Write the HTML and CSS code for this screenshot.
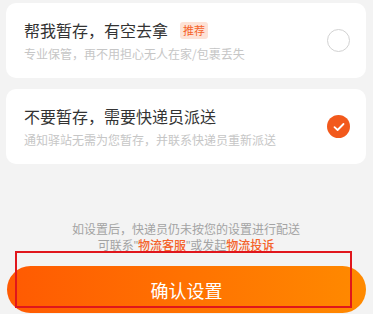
FILE: index.html
```html
<!DOCTYPE html>
<html lang="zh">
<head>
<meta charset="utf-8">
<link rel="stylesheet" href="styles.css">
</head>
<body>
<div class="page">
  <div class="card">
    <div class="info">
      <div class="title">帮我暂存，有空去拿<span class="badge">推荐</span></div>
      <div class="desc">专业保管，再不用担心无人在家/包裹丢失</div>
    </div>
    <span class="radio"></span>
  </div>
  <div class="card">
    <div class="info">
      <div class="title">不要暂存，需要快递员派送</div>
      <div class="desc">通知驿站无需为您暂存，并联系快递员重新派送</div>
    </div>
    <span class="radio checked">
      <svg width="12" height="10" viewBox="0 0 12 10"><path d="M1.5 5.2 L4.6 8 L10.5 2" fill="none" stroke="#fff" stroke-width="1.8" stroke-linecap="round" stroke-linejoin="round"/></svg>
    </span>
  </div>
  <div class="note">
    <div>如设置后，快递员仍未按您的设置进行配送</div>
    <div>可联系<span class="q">"</span><span class="link">物流客服</span><span class="q">"</span>或发起<span class="link">物流投诉</span></div>
  </div>
  <button class="confirm">确认设置</button>
  <div class="mark"></div>
</div>
</body>
</html>
```
FILE: styles.css
```css
html, body {
  margin: 0;
  padding: 0;
  background: #f3f3f3;
}
body {
  font-family: "Noto Sans CJK SC", "Noto Sans", sans-serif;
  width: 373px;
  height: 314px;
  overflow: hidden;
}
.page {
  position: relative;
  padding: 3px 7px 0 6px;
  display: flex;
  flex-direction: column;
}
.card {
  background: #fff;
  border-radius: 10px;
  padding: 16px 16px 16px 18px;
  display: flex;
  align-items: center;
  justify-content: space-between;
  margin-bottom: 11px;
}
.title {
  font-size: 16px;
  line-height: 22px;
  color: #333;
  display: flex;
  align-items: center;
}
.badge {
  margin-left: 12px;
  font-size: 11px;
  line-height: 17px;
  padding: 0 3px;
  border-radius: 3px;
  background: #fde2d6;
  color: #f5622a;
}
.desc {
  margin-top: 4px;
  font-size: 12px;
  line-height: 17px;
  color: #c6c6c6;
}
.radio {
  width: 23px;
  height: 23px;
  border-radius: 50%;
  box-sizing: border-box;
  border: 1px solid #d2d2d2;
  flex: none;
  display: flex;
  align-items: center;
  justify-content: center;
}
.radio.checked {
  border: none;
  background: #f2591c;
}
.note {
  margin-top: 46px;
  text-align: center;
  font-size: 12px;
  line-height: 16px;
  color: #a3a3a3;
}
.q {
  font-family: "Liberation Sans", sans-serif;
}
.link {
  color: #f5622a;
  font-weight: 500;
}
.confirm {
  margin-top: 12px;
  margin-left: 1px;
  height: 47px;
  border: none;
  border-radius: 24px;
  background: linear-gradient(90deg, #ff5a02, #ff8a00);
  color: #fff;
  font-family: inherit;
  font-size: 18px;
}
.mark {
  position: absolute;
  left: 15px;
  top: 251px;
  width: 337px;
  height: 57px;
  box-sizing: border-box;
  border: 2px solid #e0161c;
}
```
